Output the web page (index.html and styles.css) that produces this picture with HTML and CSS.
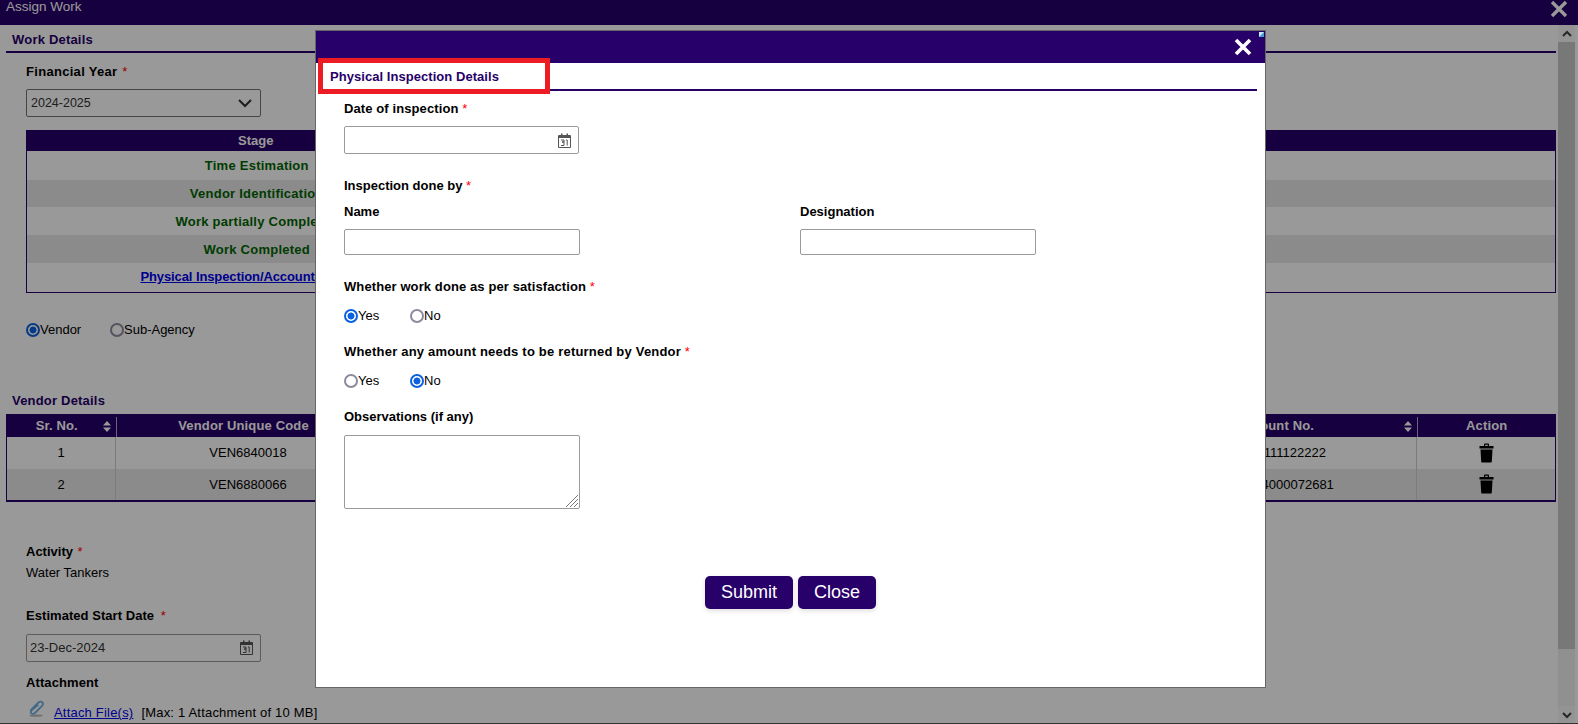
FILE: index.html
```html
<!DOCTYPE html>

<html lang="en">
	<head>
		<meta charset="UTF-8">
		<meta name="viewport" content="width=device-width, initial-scale=1.0">
		<title>Assign Work</title>

		<link rel="stylesheet" href="styles.css">
	</head>
	<body>
		<div class="page">
			<div class="topBar">
				<span class="topTitle">Assign Work</span>
				<svg class="topClose" width="18" height="18" viewBox="0 0 18 18"><path d="M2 2 L16 16 M16 2 L2 16" stroke="#fff" stroke-width="3.4" fill="none"/></svg>
			</div>
			<div class="pageRow">
				<div class="content">
					<div class="sectionTitle">Work Details</div>

					<div class="label financial">Financial Year <span class="star">*</span></div>
					<div class="selectBox">
						<span>2024-2025</span>
						<svg width="16" height="10" viewBox="0 0 16 10"><path d="M2 2 L8 8 L14 2" stroke="#333" stroke-width="2" fill="none"/></svg>
					</div>

					<table class="stageTable">
						<thead>
							<tr><th class="stageCol">Stage</th><th></th></tr>
						</thead>
						<tbody>
							<tr class="h29"><td>Time Estimation</td><td></td></tr>
							<tr class="alt h27"><td>Vendor Identification</td><td></td></tr>
							<tr class="h28"><td>Work partially Completed</td><td></td></tr>
							<tr class="alt h28"><td>Work Completed</td><td></td></tr>
							<tr class="h29"><td class="linkCell"><a href="#">Physical Inspection/Accounts Closure</a></td><td></td></tr>
						</tbody>
					</table>

					<div class="radioRow vendorRadios">
						<label class="radio radioVendor"><input type="radio" name="party" checked>Vendor</label>
						<label class="radio"><input type="radio" name="party">Sub-Agency</label>
					</div>

					<div class="subTitle">Vendor Details</div>
					<table class="vendorTable">
						<thead>
							<tr>
								<th class="colSr">Sr. No.<svg class="sort" width="8" height="11" viewBox="0 0 8 11"><path d="M4 0 L8 4.4 H0 Z M0 6.6 H8 L4 11 Z" fill="#fff"/></svg></th>
								<th class="colCode">Vendor Unique Code</th>
								<th class="colName"></th>
								<th class="colAcc">Account No.<svg class="sort" width="8" height="11" viewBox="0 0 8 11"><path d="M4 0 L8 4.4 H0 Z M0 6.6 H8 L4 11 Z" fill="#fff"/></svg></th>
								<th class="colAction">Action</th>
							</tr>
						</thead>
						<tbody>
							<tr>
								<td>1</td><td>VEN6840018</td><td></td><td class="accCell">111111111122222</td>
								<td><svg class="trash" width="15" height="20" viewBox="0 0 15 20"><path d="M5 3 V1.2 Q5 .5 5.7 .5 H9.3 Q10 .5 10 1.2 V3 H8.8 V1.7 H6.2 V3 Z M.5 3 H14.5 V5.4 H.5 Z M1.5 6.4 H13.5 L12.8 18.4 Q12.7 19.6 11.5 19.6 H3.5 Q2.3 19.6 2.2 18.4 Z" fill="#000"/></svg></td>
							</tr>
							<tr class="alt">
								<td>2</td><td>VEN6880066</td><td></td><td class="accCell">1234564000072681</td>
								<td><svg class="trash" width="15" height="20" viewBox="0 0 15 20"><path d="M5 3 V1.2 Q5 .5 5.7 .5 H9.3 Q10 .5 10 1.2 V3 H8.8 V1.7 H6.2 V3 Z M.5 3 H14.5 V5.4 H.5 Z M1.5 6.4 H13.5 L12.8 18.4 Q12.7 19.6 11.5 19.6 H3.5 Q2.3 19.6 2.2 18.4 Z" fill="#000"/></svg></td>
							</tr>
						</tbody>
					</table>

					<div class="label activity">Activity <span class="star">*</span></div>
					<div class="plain waterText">Water Tankers</div>

					<div class="label estimated">Estimated Start Date <span class="star">*</span></div>
					<div class="dateBox bgDate">
						<span>23-Dec-2024</span>
						<svg class="cal" width="13" height="15" viewBox="0 0 13 15"><path d="M.5 2.5 H12.5 V14.5 H.5 Z" fill="#fff" stroke="#555"/><path d="M1 2.5 H12 V5 H1 Z M3 .5 H4.5 V3 H3 Z M8.5 .5 H10 V3 H8.5 Z" fill="#555"/><path d="M3 7 H6 V9 H4 H6 V12.5 H3 M8 7 H9.2 V12.5" fill="none" stroke="#555"/></svg>
					</div>

					<div class="label attachment">Attachment</div>
					<div class="attachRow">
						<svg class="clip" width="17" height="17" viewBox="0 0 17 17"><ellipse cx="8" cy="15.6" rx="7" ry="1.2" fill="#bbb"/><path d="M2.5 10.5 L10.5 2.5 Q12.5 .8 14.2 2.2 Q15.8 4 14 6 L7 13 Q5 14.6 3.4 13.4 Q2 11.8 3.8 10 L10.4 4.6" fill="none" stroke="#6fb0e0" stroke-width="1.8"/></svg>
						<a href="#">Attach File(s)</a>
						<span class="maxNote">[Max: 1 Attachment of 10 MB]</span>
					</div>
				</div>
				<div class="scrollbar">
					<div class="scrollBtn"><svg width="12" height="8" viewBox="0 0 12 8"><path d="M2 6 L6 2 L10 6" stroke="#444" stroke-width="2" fill="none"/></svg></div>
					<div class="scrollThumb"></div>
					<div class="scrollTrack"></div>
					<div class="scrollBtn"><svg width="12" height="8" viewBox="0 0 12 8"><path d="M2 2 L6 6 L10 2" stroke="#444" stroke-width="2" fill="none"/></svg></div>
				</div>
			</div>
		</div>

		<div class="overlay"></div>

		<div class="modal">
			<div class="modalHead">
				<svg width="18" height="18" viewBox="0 0 18 18"><path d="M2 2 L16 16 M16 2 L2 16" stroke="#fff" stroke-width="3.6" fill="none"/></svg>
			</div>
			<svg class="brokenImg" width="5" height="5" viewBox="0 0 5 5"><rect width="5" height="5" fill="#cfe6f7"/><path d="M0 5 L5 0 V5 Z" fill="#4a9ad4"/></svg>
			<div class="modalTitle">Physical Inspection Details</div>
			<div class="redBox"></div>

			<div class="form">
				<div class="label dateLabel">Date of inspection <span class="star">*</span></div>
				<div class="dateBox modalDate">
					<svg class="cal" width="13" height="15" viewBox="0 0 13 15"><path d="M.5 2.5 H12.5 V14.5 H.5 Z" fill="#fff" stroke="#555"/><path d="M1 2.5 H12 V5 H1 Z M3 .5 H4.5 V3 H3 Z M8.5 .5 H10 V3 H8.5 Z" fill="#555"/><path d="M3 7 H6 V9 H4 H6 V12.5 H3 M8 7 H9.2 V12.5" fill="none" stroke="#555"/></svg>
				</div>

				<div class="label doneBy">Inspection done by <span class="star">*</span></div>
				<div class="twoCols">
					<div>
						<div class="label">Name</div>
						<input class="textInput" type="text">
					</div>
					<div>
						<div class="label">Designation</div>
						<input class="textInput" type="text">
					</div>
				</div>

				<div class="label question">Whether work done as per satisfaction <span class="star">*</span></div>
				<div class="radioRow modalRadios">
					<label class="radio radioYes"><input type="radio" name="satisfied" checked>Yes</label>
					<label class="radio"><input type="radio" name="satisfied">No</label>
				</div>

				<div class="label question2 wide">Whether any amount needs to be returned by Vendor <span class="star">*</span></div>
				<div class="radioRow modalRadios">
					<label class="radio radioYes"><input type="radio" name="returned">Yes</label>
					<label class="radio"><input type="radio" name="returned" checked>No</label>
				</div>

				<div class="label question2 obsLabel">Observations (if any)</div>
				<div class="obsWrap">
					<textarea class="obs"></textarea>
					<svg class="grip" width="14" height="14" viewBox="0 0 14 14"><path d="M1 13 L13 1 M5 13 L13 5 M9 13 L13 9" stroke="#777" stroke-width="1" fill="none"/></svg>
				</div>
			</div>

			<div class="buttons">
				<button class="btn">Submit</button>
				<button class="btn">Close</button>
			</div>
		</div>
	</body>
</html>
```

FILE: styles.css
```css
* {
	box-sizing: border-box;
	font-family: "Liberation Sans", Arial, sans-serif;
}
html, body {
	margin: 0;
	height: 724px;
	overflow: hidden;
	background-color: #ffffff;
}
a {
	color: #0000ee;
}

/* page behind the dialog */
.page {
	height: 724px;
	display: flex;
	flex-direction: column;
	border-bottom: 1px solid #555;
}
.topBar {
	height: 25px;
	flex: none;
	background-color: #27006a;
	color: #fff;
	display: flex;
	justify-content: space-between;
	padding: 0 10px 0 6px;
}
.topTitle {
	font-size: 13.5px;
	line-height: 14px;
}
.pageRow {
	flex: 1;
	display: flex;
	min-height: 0;
}
.content {
	width: 1556px;
	padding-left: 6px;
	font-size: 13px;
	color: #000;
}
.scrollbar {
	width: 17px;
	margin-left: 2px;
	display: flex;
	flex-direction: column;
	background-color: #f1f1f1;
}
.scrollBtn {
	height: 17px;
	display: flex;
	align-items: center;
	justify-content: center;
	background-color: #f7f7f7;
}
.scrollThumb {
	height: 607px;
	background-color: #c8c8c8;
}
.scrollTrack {
	flex: 1;
}

.sectionTitle {
	height: 28px;
	padding: 7px 0 0 6px;
	line-height: 16px;
	font-size: 13px;
	font-weight: bold;
	letter-spacing: 0.2px;
	color: #27006a;
	border-bottom: 2px solid #27006a;
}
.subTitle {
	margin: 55px 0 5px 6px;
	line-height: 16px;
	font-weight: bold;
	letter-spacing: 0.2px;
	color: #27006a;
}
.label {
	height: 16px;
	font-size: 13px;
	line-height: 18px;
	font-weight: bold;
	color: #000;
}
.star {
	color: #ff0000;
	font-weight: normal;
}
.plain {
	line-height: 16px;
}
.financial {
	margin: 10px 0 0 20px;
	letter-spacing: 0.3px;
}
.financial .star, .activity .star {
	margin-left: 1px;
}
.selectBox {
	width: 235px;
	height: 28px;
	margin: 10px 0 0 20px;
	padding: 0 7px 0 4px;
	display: flex;
	align-items: center;
	justify-content: space-between;
	border: 1px solid #767676;
	border-radius: 2px;
	font-size: 12.5px;
	color: #333;
	background-color: #fff;
}

.stageTable {
	width: 1530px;
	margin: 13px 0 0 20px;
	border-collapse: collapse;
	table-layout: fixed;
	border: 1px solid #27006a;
	border-top: none;
	font-size: 13px;
}
.stageTable th {
	height: 21px;
	padding: 0 2px 0 0;
	background-color: #27006a;
	color: #fff;
	font-weight: bold;
}
.stageCol {
	width: 460px;
}
.stageTable td {
	padding: 0;
	text-align: center;
	font-weight: bold;
	letter-spacing: 0.25px;
	color: #006400;
}
.stageTable .linkCell {
	padding-bottom: 2px;
}
.stageTable a {
	color: #0000ee;
	letter-spacing: -0.1px;
}
.h29 {
	height: 29px;
}
.h28 {
	height: 28px;
}
.h27 {
	height: 27px;
}
.alt {
	background-color: #e8e8e8;
}

.radioRow {
	display: flex;
	line-height: 16px;
}
.radio {
	display: flex;
	align-items: center;
	font-size: 13px;
	color: #000;
}
.radio input {
	appearance: none;
	width: 14px;
	height: 14px;
	margin: 0;
	border: 2px solid #8e8a9e;
	border-radius: 50%;
	background-color: #fff;
}
.radio input:checked {
	border-color: #0b62e0;
	background: radial-gradient(circle, #0b62e0 0, #0b62e0 3.2px, #fff 3.8px);
}
.vendorRadios {
	margin: 29px 0 0 20px;
}
.radioVendor {
	width: 84px;
}
.radioYes {
	width: 66px;
}

.vendorTable {
	width: 1550px;
	border-collapse: collapse;
	table-layout: fixed;
	font-size: 13px;
	border: 1px solid #27006a;
	border-top: none;
	border-bottom: 2px solid #27006a;
}
.vendorTable th {
	height: 23px;
	padding: 0;
	background-color: #27006a;
	color: #fff;
	font-weight: bold;
	letter-spacing: 0.15px;
	position: relative;
}
.vendorTable th + th::before {
	content: "";
	position: absolute;
	left: 0;
	top: 3px;
	bottom: 0;
	width: 1px;
	background-color: #b0a6c8;
}
.vendorTable td {
	height: 32px;
	padding: 0;
	text-align: center;
	border-left: 1px solid #cfcfcf;
}
.vendorTable td:first-child {
	border-left: none;
}
.vendorTable .accCell {
	padding-left: 2px;
}
.colSr {
	width: 109px;
	padding-right: 9px !important;
}
.colCode {
	width: 265px;
	padding-right: 9px !important;
}
.colAcc {
	width: 283px;
}
.colAction {
	width: 139px;
	padding-left: 2px !important;
}
.colName {
	width: auto;
}
.sort {
	position: absolute;
	right: 5px;
	top: 7px;
}
.trash {
	display: block;
	margin: 0 auto;
}

.activity {
	margin: 41px 0 0 20px;
}
.waterText {
	margin: 6px 0 0 20px;
}
.estimated {
	margin: 26px 0 0 20px;
	letter-spacing: 0.05px;
}
.estimated .star {
	margin-left: 3px;
}
.dateBox {
	height: 28px;
	display: flex;
	align-items: center;
	justify-content: space-between;
	padding: 0 7px 0 4px;
	border: 1px solid #9a9a9a;
	border-radius: 2px;
	background-color: #fff;
}
.bgDate {
	width: 235px;
	margin: 11px 0 0 20px;
	padding-left: 3px;
	font-size: 13px;
	color: #333;
}
.attachment {
	margin: 12px 0 0 20px;
	letter-spacing: 0.1px;
}
.attachRow {
	display: flex;
	align-items: center;
	height: 16px;
	margin: 15px 0 0 22px;
	font-size: 13px;
	letter-spacing: 0.2px;
}
.clip {
	margin: -8px 9px 0 0;
}
.attachRow a {
	margin-right: 8px;
}

/* dialog */
.overlay {
	position: fixed;
	inset: 0;
	background-color: rgba(0, 0, 0, 0.4);
}
.modal {
	position: absolute;
	left: 315px;
	top: 30px;
	width: 951px;
	height: 658px;
	background-color: #fff;
	border: 1px solid #666;
}
.modalHead {
	height: 32px;
	background-color: #27006a;
	display: flex;
	justify-content: flex-end;
	align-items: center;
	padding-right: 13px;
}
.brokenImg {
	position: absolute;
	right: 1px;
	top: 1px;
}
.modalTitle {
	height: 28px;
	margin: 0 8px 0 4px;
	padding: 6px 0 0 10px;
	line-height: 16px;
	font-size: 13px;
	font-weight: bold;
	letter-spacing: 0.05px;
	color: #27006a;
	border-bottom: 2px solid #27006a;
}
.redBox {
	position: absolute;
	left: 2px;
	top: 27px;
	width: 232px;
	height: 36px;
	border: 5px solid #ed1c24;
}
.form {
	padding: 9px 0 0 28px;
}
.dateLabel {
	letter-spacing: 0.1px;
}
.modalDate {
	width: 235px;
	margin-top: 10px;
	justify-content: flex-end;
}
.doneBy {
	margin-top: 23px;
}
.twoCols {
	display: grid;
	grid-template-columns: 456px 236px;
	margin-top: 10px;
}
.textInput {
	display: block;
	width: 236px;
	height: 26px;
	margin-top: 10px;
	border: 1px solid #9a9a9a;
	border-radius: 2px;
}
.question {
	margin-top: 23px;
	letter-spacing: 0.1px;
}
.question2 {
	margin-top: 20px;
}
.wide {
	letter-spacing: 0.2px;
}
.modalRadios {
	margin: 14px 0 -1px;
}
.obsWrap {
	position: relative;
	width: 236px;
	height: 74px;
	margin-top: 11px;
}
.obs {
	display: block;
	width: 236px;
	height: 74px;
	border: 1px solid #9a9a9a;
	border-radius: 2px;
	resize: none;
}
.grip {
	position: absolute;
	right: 1px;
	bottom: 1px;
}
.buttons {
	display: flex;
	justify-content: center;
	gap: 5px;
	margin-top: 67px;
}
.btn {
	height: 33px;
	padding: 0 16px;
	border: none;
	border-radius: 5px;
	background-color: #27006a;
	color: #fff;
	font-size: 18px;
	box-shadow: 0 2px 5px #00000022;
}
```
